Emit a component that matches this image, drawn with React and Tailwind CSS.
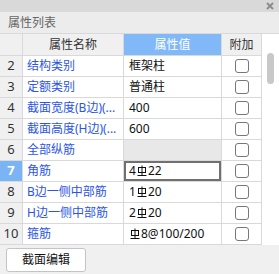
import React from 'react';

const rows = [
  { no: 2, name: '结构类别', value: '框架柱' },
  { no: 3, name: '定额类别', value: '普通柱' },
  { no: 4, name: '截面宽度(B边)(...', value: '400' },
  { no: 5, name: '截面高度(H边)(...', value: '600' },
  { no: 6, name: '全部纵筋', value: '', disabled: true },
  { no: 7, name: '角筋', value: ['4', '22'], selected: true },
  { no: 8, name: 'B边一侧中部筋', value: ['1', '20'] },
  { no: 9, name: 'H边一侧中部筋', value: ['2', '20'] },
  { no: 10, name: '箍筋', value: ['', '8@100/200'] },
];

// 三级钢符号
function Rebar() {
  return (
    <svg width="10" height="12" viewBox="0 0 10 12" className="inline-block mx-[1px] -mt-[2px]">
      <rect x="1.5" y="2.5" width="7" height="5" fill="none" stroke="#111" strokeWidth="1" />
      <path d="M5 0.5V11M0.5 10.5H9.5" stroke="#111" strokeWidth="1" />
    </svg>
  );
}

export default function App() {
  const line = 'border-[#d9d9d9]';
  return (
    <div className="w-[279px] h-[274px] bg-[#f0f0f0] flex flex-col" style={{ fontFamily: '"Noto Sans", "Noto Sans CJK SC", sans-serif' }}>
      <div className="h-[12px] bg-[#d9d9d9] flex justify-end items-center pr-[5px]">
        <svg width="8" height="8" viewBox="0 0 8 8">
          <path d="M1 1L7 7M7 1L1 7" stroke="#8a8a8a" strokeWidth="1.8" />
        </svg>
      </div>
      <div className="h-[21px] bg-[#ececec] flex items-center pl-[8px] text-[12px] text-[#666]">属性列表</div>

      <div className={`flex bg-white border-t ${line}`}>
        <div className="grid grid-cols-[23px_101px_98px_40px] text-[12px]">
          <div className={`h-[22px] bg-[#f0f0f0] border-r border-b ${line}`} />
          <div className={`h-[22px] bg-[#f0f0f0] border-r border-b ${line} flex items-center justify-center text-[#333]`}>属性名称</div>
          <div className={`h-[22px] bg-[#80b8f8] border-r border-b ${line} flex items-center justify-center text-white`}>属性值</div>
          <div className={`h-[22px] bg-[#f0f0f0] border-r border-b ${line} flex items-center justify-center text-[#333]`}>附加</div>

          {rows.map((r) => (
            <React.Fragment key={r.no}>
              <div className={`h-[21px] border-r border-b ${line} flex items-center justify-center text-[13px] ${r.selected ? 'bg-[#7ab4f5] text-white font-bold' : 'bg-[#f0f0f0] text-[#333]'}`}>{r.no}</div>
              <div className={`h-[21px] border-r border-b ${line} flex items-center pl-[4px] text-[#2b55e6] whitespace-nowrap overflow-hidden`}>{r.name}</div>
              <div className={`h-[21px] border-r border-b ${line} flex items-center pl-[5px] text-[#111] ${r.disabled ? 'bg-[#e8e8e8]' : ''} ${r.selected ? 'shadow-[inset_0_0_0_2px_#707070]' : ''}`}>
                {Array.isArray(r.value) ? (
                  <span>{r.value[0]}<Rebar />{r.value[1]}</span>
                ) : r.value}
              </div>
              <div className={`h-[21px] border-r border-b ${line} flex items-center justify-center`}>
                <div className="w-[14px] h-[14px] border border-[#777] rounded-[3px] bg-white" />
              </div>
            </React.Fragment>
          ))}
        </div>
        <div className="w-[17px] pt-[19px] flex justify-center">
          <div className="w-[7px] h-[31px] rounded-full bg-[#c8c8c8]" />
        </div>
      </div>

      <div className="pt-[3px] pl-[6px]">
        <button className="w-[80px] h-[24px] bg-white border border-[#c4c4c4] rounded-[3px] text-[12px] text-[#111] flex items-center justify-center">截面编辑</button>
      </div>
    </div>
  );
}
